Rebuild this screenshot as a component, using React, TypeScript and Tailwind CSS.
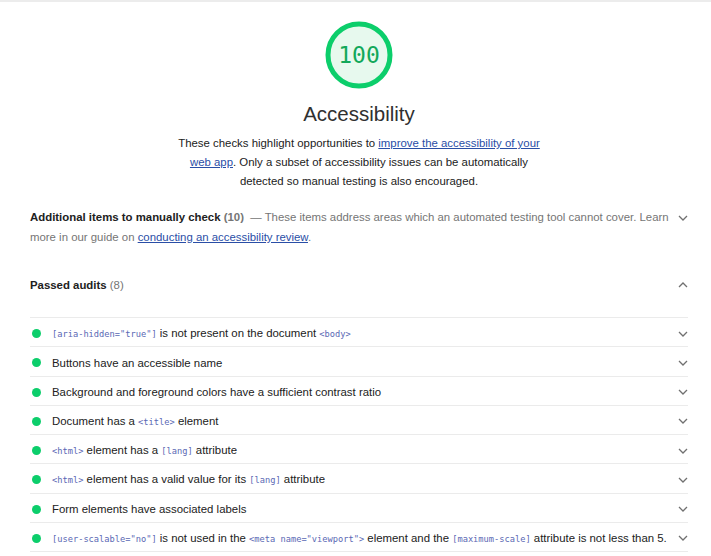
import React from "react";

const code = "font-['DejaVu_Sans_Mono',monospace] text-[8.7px] text-[#5a68b4]";

function Chevron({ up = false }: { up?: boolean }) {
  return (
    <svg width="12" height="12" viewBox="0 0 12 12" className="shrink-0">
      <polyline
        points={up ? "2,8 6,4 10,8" : "2,4 6,8 10,4"}
        fill="none"
        stroke="#707070"
        strokeWidth="1.3"
      />
    </svg>
  );
}

function Gauge() {
  return (
    <div className="relative h-[68px] w-[68px]">
      <svg width="68" height="68" viewBox="0 0 68 68">
        <circle cx="34" cy="34" r="31" fill="#e7f9ee" stroke="#0cce6b" strokeWidth="5" />
      </svg>
      <div className="absolute inset-0 flex items-center justify-center font-['DejaVu_Sans_Mono',monospace] text-[23px] text-[#12a85a]">
        100
      </div>
    </div>
  );
}

const audits: React.ReactNode[] = [
  <>
    <code className={code}>[aria-hidden="true"]</code> is not present on the document{" "}
    <code className={code}>&lt;body&gt;</code>
  </>,
  <>Buttons have an accessible name</>,
  <>Background and foreground colors have a sufficient contrast ratio</>,
  <>
    Document has a <code className={code}>&lt;title&gt;</code> element
  </>,
  <>
    <code className={code}>&lt;html&gt;</code> element has a <code className={code}>[lang]</code> attribute
  </>,
  <>
    <code className={code}>&lt;html&gt;</code> element has a valid value for its{" "}
    <code className={code}>[lang]</code> attribute
  </>,
  <>Form elements have associated labels</>,
  <>
    <code className={code}>[user-scalable="no"]</code> is not used in the{" "}
    <code className={code}>&lt;meta name="viewport"&gt;</code> element and the{" "}
    <code className={code}>[maximum-scale]</code> attribute is not less than 5.
  </>,
];

export default function App() {
  return (
    <div className="min-h-[556px] w-[711px] overflow-hidden bg-white font-['Liberation_Sans',Arial,sans-serif] text-[11.4px] text-[#212121]">
      <div className="h-[2px] bg-[#ececec]" />
      <div className="pl-[30px] pr-[23px]">
        <div className="flex flex-col items-center pt-[19px]">
          <Gauge />
          <div className="mt-[13px] text-[20.5px] leading-[24px] text-[#303030]">Accessibility</div>
          <p className="mt-[8px] w-[368px] text-center leading-[19px]">
            These checks highlight opportunities to{" "}
            <a className="text-[#2a4ea6] underline">improve the accessibility of your web app</a>. Only a
            subset of accessibility issues can be automatically detected so manual testing is also
            encouraged.
          </p>
        </div>

        <div className="mt-[16px] flex items-start justify-between">
          <div className="w-[645px] leading-[20px] text-[#757575]">
            <span className="font-bold text-[#212121]">Additional items to manually check</span>{" "}
            <span className="font-bold">(10)</span> &nbsp;— These items address areas which an
            automated testing tool cannot cover. Learn more in our guide on{" "}
            <a className="text-[#2a4ea6] underline">conducting an accessibility review</a>.
          </div>
          <div className="mt-[5px] mr-[-1px]">
            <Chevron />
          </div>
        </div>

        <div className="mt-[28px] flex items-center justify-between leading-[20px]">
          <div>
            <span className="font-bold">Passed audits</span>{" "}
            <span className="text-[#757575]">(8)</span>
          </div>
          <div className="mr-[-1px]">
            <Chevron up />
          </div>
        </div>

        <div className="mt-[22px] border-b border-[#ebebeb]">
          {audits.map((a, i) => (
            <div
              key={i}
              className="flex h-[29.25px] items-center border-t border-[#ebebeb] pt-[3px]"
            >
              <span className="ml-[2px] h-[9px] w-[9px] shrink-0 rounded-full bg-[#0cce6b]" />
              <div className="ml-[11px] flex-1 whitespace-nowrap leading-[16px]">{a}</div>
              <div className="mr-[-1px]">
                <Chevron />
              </div>
            </div>
          ))}
        </div>
      </div>
    </div>
  );
}
